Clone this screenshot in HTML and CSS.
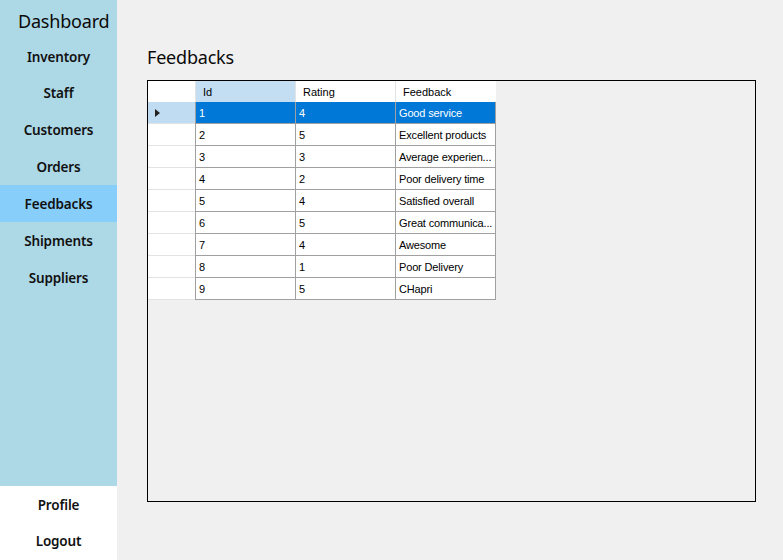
FILE: index.html
```html
<!DOCTYPE html>
<html>
<head>
<meta charset="utf-8">
<link rel="stylesheet" href="styles.css">
</head>
<body>
<div class="app">
  <aside class="sidebar">
    <div class="nav">
      <div class="brand">Dashboard</div>
      <div class="item">Inventory</div>
      <div class="item">Staff</div>
      <div class="item">Customers</div>
      <div class="item">Orders</div>
      <div class="item active">Feedbacks</div>
      <div class="item">Shipments</div>
      <div class="item">Suppliers</div>
    </div>
    <div class="bottom">
      <div class="item">Profile</div>
      <div class="item">Logout</div>
    </div>
  </aside>
  <main class="main">
    <h1 class="title">Feedbacks</h1>
    <div class="gridbox">
      <table class="grid">
        <thead>
          <tr>
            <th class="rh"></th>
            <th class="sel">Id</th>
            <th>Rating</th>
            <th class="last">Feedback</th>
          </tr>
        </thead>
        <tbody>
          <tr class="current"><td class="rh"><span class="tri"></span></td><td>1</td><td>4</td><td class="last">Good service</td></tr>
          <tr><td class="rh"></td><td>2</td><td>5</td><td class="last">Excellent products</td></tr>
          <tr><td class="rh"></td><td>3</td><td>3</td><td class="last">Average experien...</td></tr>
          <tr><td class="rh"></td><td>4</td><td>2</td><td class="last">Poor delivery time</td></tr>
          <tr><td class="rh"></td><td>5</td><td>4</td><td class="last">Satisfied overall</td></tr>
          <tr><td class="rh"></td><td>6</td><td>5</td><td class="last">Great communica...</td></tr>
          <tr><td class="rh"></td><td>7</td><td>4</td><td class="last">Awesome</td></tr>
          <tr><td class="rh"></td><td>8</td><td>1</td><td class="last">Poor Delivery</td></tr>
          <tr><td class="rh"></td><td>9</td><td>5</td><td class="last">CHapri</td></tr>
        </tbody>
      </table>
    </div>
  </main>
</div>
</body>
</html>
```

FILE: styles.css
```css
* { box-sizing: border-box; }
html, body { margin: 0; padding: 0; }
body {
  width: 783px;
  height: 560px;
  overflow: hidden;
  background: #f0f0f0;
  font-family: "Noto Sans", "Open Sans", sans-serif;
  color: #000;
}
.app {
  display: flex;
  height: 560px;
}
.sidebar {
  width: 117px;
  flex: none;
  display: flex;
  flex-direction: column;
  background: #add8e6;
}
.nav {
  flex: 1;
  display: flex;
  flex-direction: column;
}
.brand {
  height: 38px;
  padding-left: 18px;
  padding-top: 8px;
  font-size: 18px;
  line-height: 26px;
  color: #0a0a0a;
  letter-spacing: -0.2px;
}
.item {
  height: 37px;
  display: flex;
  align-items: center;
  justify-content: center;
  font-size: 13.5px;
  font-weight: 600;
  color: #111;
  letter-spacing: -0.15px;
}
.nav .brand + .item { height: 36px; padding-top: 1px; }
.item.active { background: #87cefa; }
.bottom {
  height: 74px;
  background: #ffffff;
  display: flex;
  flex-direction: column;
  padding-top: 1px;
}
.bottom .item { height: 36px; }
.main {
  flex: 1;
  padding-left: 30px;
  padding-top: 44px;
}
.title {
  margin: 0;
  height: 36px;
  font-size: 18px;
  font-weight: 400;
  line-height: 26px;
  color: #0a0a0a;
  letter-spacing: -0.2px;
}
.gridbox {
  width: 609px;
  height: 422px;
  border: 1px solid #000;
  background: #f0f0f0;
}
.grid {
  border-collapse: separate;
  border-spacing: 0;
  table-layout: fixed;
  width: 348px;
  font-family: "Liberation Sans", Arial, sans-serif;
  font-size: 11px;
}
.grid th, .grid td {
  padding: 0 0 0 3px;
  text-align: left;
  white-space: nowrap;
  overflow: hidden;
  font-weight: 400;
  width: 100px;
}
.grid th {
  height: 21px;
  background: #fff;
  padding-left: 7px;
  border-left: 1px solid #e3e3e3;
}
.grid th.sel { background: #c3ddf2; }
.grid th.rh { border-left: none; }
.grid td {
  height: 22px;
  background: #fff;
  border-left: 1px solid #a0a0a0;
  border-bottom: 1px solid #a0a0a0;
}
.grid .rh {
  width: 47px;
  padding: 0;
  background: #fff;
  border-left: none;
}
.grid td.rh { border-bottom: 1px solid #e3e3e3; }
.grid .last { width: 101px; border-right: 1px solid #a0a0a0; letter-spacing: -0.15px; }
.grid th.last { border-right: none; letter-spacing: 0; }
.grid tr.current td { background: #0078d7; color: #fff; }
.grid tr.current td.rh { background: #bfdcf3; }
.tri {
  display: block;
  width: 0;
  height: 0;
  margin-left: 7px;
  border-top: 4.5px solid transparent;
  border-bottom: 4.5px solid transparent;
  border-left: 5px solid #222;
}
```
